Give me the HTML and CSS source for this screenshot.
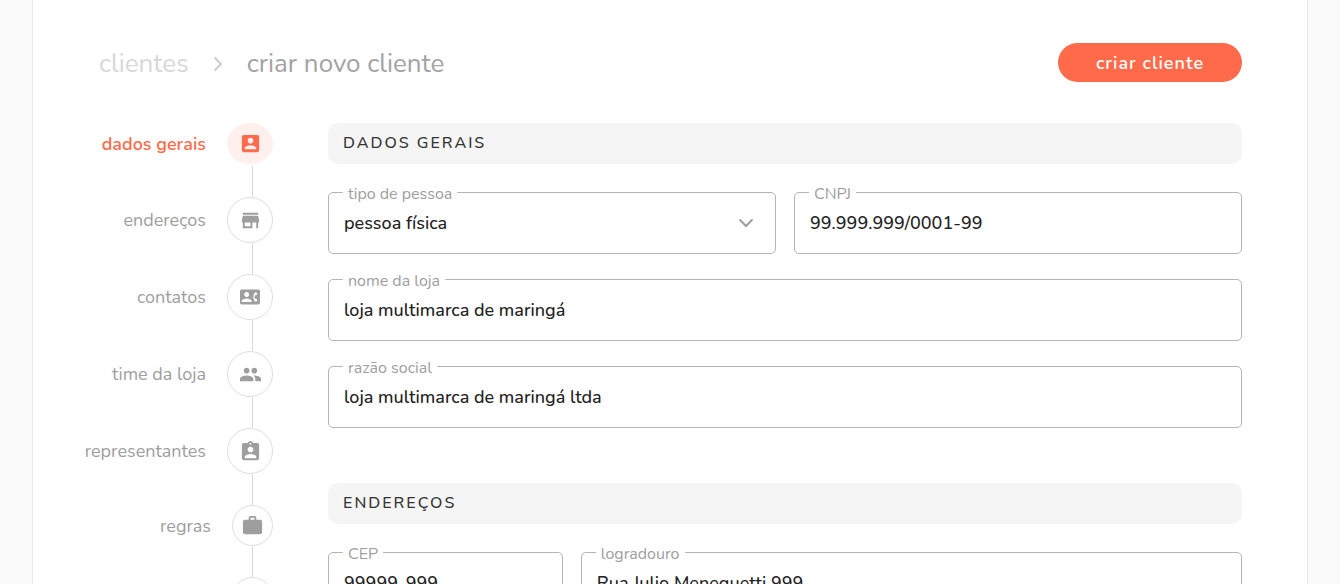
FILE: index.html
```html
<!DOCTYPE html>
<html lang="pt-BR">
<head>
  <meta charset="UTF-8" />
  <meta name="viewport" content="width=device-width, initial-scale=1.0" />
  <title>criar novo cliente</title>
  <link rel="stylesheet" href="styles.css">
</head>
<body>
  <main class="card">
    <header class="header">
      <nav class="breadcrumb">
        <a href="#">clientes</a>
        <svg class="chevron" viewBox="0 0 10 16"><path d="M1.5 1.5L8 8l-6.500 6.500" /></svg>
        <h1>criar novo cliente</h1>
      </nav>
      <button type="submit" form="clientForm" class="button">criar cliente</button>
    </header>

    <div class="content">
      <ul class="steps">
        <li class="step active">
          <a href="#dados">
            <span>dados gerais</span>
            <i class="circle"><svg class="icon" viewBox="0 0 24 24"><path d="M3 5v14c0 1.100.890 2 2 2h14c1.100 0 2-.900 2-2V5c0-1.100-.900-2-2-2H5c-1.110 0-2 .900-2 2zm12 4c0 1.660-1.340 3-3 3s-3-1.340-3-3 1.340-3 3-3 3 1.340 3 3zm-9 8c0-2 4-3.100 6-3.100s6 1.100 6 3.100v1H6v-1z" /></svg></i>
          </a>
        </li>
        <li class="step">
          <a href="#enderecos">
            <span>endereços</span>
            <i class="circle"><svg class="icon" viewBox="0 0 24 24"><path d="M20 4H4v2h16V4zm1 10v-2l-1-5H4l-1 5v2h1v6h10v-6h4v6h2v-6h1zm-9 4H6v-4h6v4z" /></svg></i>
          </a>
        </li>
        <li class="step">
          <a href="#">
            <span>contatos</span>
            <i class="circle"><svg class="icon small" viewBox="0 0 24 24"><path d="M22 3H2C.9 3 0 3.900 0 5v14c0 1.100.9 2 2 2h20c1.100 0 1.990-.9 1.990-2L24 5c0-1.100-.9-2-2-2zM8 6c1.660 0 3 1.340 3 3s-1.340 3-3 3-3-1.340-3-3 1.340-3 3-3zm6 12H2v-1c0-2 4-3.100 6-3.100s6 1.100 6 3.100v1zm3.850-4h1.640L21 16l-1.990 1.990c-1.310-.98-2.280-2.380-2.730-3.990-.18-.64-.28-1.310-.28-2s.1-1.360.28-2c.45-1.620 1.420-3.010 2.730-3.990L21 8l-1.510 2h-1.640c-.22.630-.35 1.300-.35 2s.13 1.370.35 2z" /></svg></i>
          </a>
        </li>
        <li class="step">
          <a href="#">
            <span>time da loja</span>
            <i class="circle"><svg class="icon" viewBox="0 0 24 24"><path d="M16 11c1.660 0 2.990-1.340 2.990-3S17.660 5 16 5c-1.660 0-3 1.340-3 3s1.340 3 3 3zm-8 0c1.660 0 2.990-1.340 2.990-3S9.660 5 8 5C6.340 5 5 6.340 5 8s1.340 3 3 3zm0 2c-2.330 0-7 1.170-7 3.500V19h14v-2.500c0-2.330-4.670-3.500-7-3.500zm8 0c-.29 0-.62.02-.97.050 1.160.84 1.970 1.970 1.970 3.450V19h6v-2.500c0-2.330-4.670-3.500-7-3.500z" /></svg></i>
          </a>
        </li>
        <li class="step">
          <a href="#">
            <span>representantes</span>
            <i class="circle"><svg class="icon" viewBox="0 0 24 24"><path d="M19 3h-4.180C14.400 1.840 13.300 1 12 1c-1.300 0-2.400.84-2.820 2H5c-1.100 0-2 .9-2 2v14c0 1.100.9 2 2 2h14c1.100 0 2-.9 2-2V5c0-1.100-.9-2-2-2zm-7 0c.55 0 1 .45 1 1s-.45 1-1 1-1-.45-1-1 .45-1 1-1zm0 4c1.660 0 3 1.340 3 3s-1.340 3-3 3-3-1.340-3-3 1.340-3 3-3zm6 12H6v-1.400c0-2 4-3.100 6-3.100s6 1.100 6 3.100V19z" /></svg></i>
          </a>
        </li>
        <li class="step compact">
          <a href="#">
            <span>regras</span>
            <i class="circle"><svg class="icon" viewBox="0 0 24 24"><path d="M20 6h-4V4c0-1.110-.89-2-2-2h-4c-1.110 0-2 .89-2 2v2H4c-1.110 0-1.990.89-1.990 2L2 19c0 1.110.89 2 2 2h16c1.110 0 2-.89 2-2V8c0-1.110-.89-2-2-2zm-6 0h-4V4h4v2z" /></svg></i>
          </a>
        </li>
        <li class="step compact">
          <i class="circle"></i>
        </li>
      </ul>

      <form class="form" id="clientForm">
        <section class="section" id="dados">
          <h2>DADOS GERAIS</h2>
          <div class="row halves">
            <div class="field">
              <label for="tipo">tipo de pessoa</label>
              <select id="tipo" name="tipo">
                <option>pessoa física</option>
              </select>
              <svg class="arrow" viewBox="0 0 16 10"><path d="M1.500 1.500L8 8l6.500-6.500" /></svg>
            </div>
            <div class="field">
              <label for="cnpj">CNPJ</label>
              <input type="text" id="cnpj" name="cnpj" value="99.999.999/0001-99" />
            </div>
          </div>
          <div class="field">
            <label for="nome">nome da loja</label>
            <input type="text" id="nome" name="nome" value="loja multimarca de maringá" />
          </div>
          <div class="field">
            <label for="razao">razão social</label>
            <input type="text" id="razao" name="razao" value="loja multimarca de maringá ltda" />
          </div>
        </section>

        <section class="section" id="enderecos">
          <h2>ENDEREÇOS</h2>
          <div class="row address">
            <div class="field">
              <label for="cep">CEP</label>
              <input type="text" id="cep" name="cep" value="99999-999" />
            </div>
            <div class="field">
              <label for="logradouro">logradouro</label>
              <input type="text" id="logradouro" name="logradouro" value="Rua Julio Meneguetti 999" />
            </div>
          </div>
        </section>
      </form>
    </div>
  </main>
</body>
</html>
```
FILE: styles.css
```css
* {
  box-sizing: border-box;
}

body {
  font-family: Nunito, Lato, sans-serif;
  background: #fafafa;
  margin: 0;
  padding: 0 32px;
  height: 100vh;
  overflow: hidden;
}

.card {
  background: #fff;
  border: 1px solid #e8e8e8;
  border-width: 0 1px;
  min-height: 100vh;
  padding: 43px 65px 43px 49px;
}

.header {
  display: flex;
  justify-content: space-between;
  align-items: center;
  padding-left: 17px;
  margin-bottom: 41px;
}

.breadcrumb {
  display: flex;
  align-items: center;
  gap: 24px;
  padding-top: 2px;
  font-size: 26px;
  line-height: 37px;
}

.breadcrumb a {
  color: #d8d8d8;
  text-decoration: none;
}

.breadcrumb h1 {
  margin: 0;
  font-size: 26px;
  font-weight: 400;
  color: #a3a3a3;
}

.chevron {
  width: 10px;
  height: 16px;
  fill: none;
  stroke: #ccc;
  stroke-width: 2;
}

.button {
  width: 184px;
  height: 39px;
  background: #ff6b4a;
  color: #fff;
  border: none;
  border-radius: 20px;
  font-family: inherit;
  font-size: 18px;
  font-weight: 600;
  letter-spacing: 1px;
  cursor: pointer;
}

.content {
  display: flex;
  align-items: flex-start;
  gap: 55px;
}

/* Steps */
.steps {
  width: 191px;
  flex-shrink: 0;
  list-style: none;
  margin: 0;
  padding: 0;
}

.step + .step::before {
  content: "";
  display: block;
  width: 1px;
  height: 31px;
  margin: 0 20px 0 auto;
  background: #d9d9d9;
}

.step a {
  display: flex;
  justify-content: flex-end;
  align-items: center;
  gap: 21px;
  color: #9e9e9e;
  font-size: 18px;
  text-decoration: none;
}

.circle {
  display: flex;
  flex-shrink: 0;
  justify-content: center;
  align-items: center;
  width: 46px;
  height: 46px;
  border: 1px solid #dedede;
  border-radius: 50%;
}

.icon {
  width: 23px;
  height: 23px;
  fill: #9e9e9e;
}

.icon.small {
  width: 20px;
  height: 20px;
}

.active {
  margin-bottom: 2px;
}

.active a {
  color: #ff6b4a;
  font-weight: 600;
}

.active .circle {
  height: 41px;
  background: #fff0ed;
  border: none;
}

.active .icon {
  fill: #ff6b4a;
}

.compact .circle {
  width: 41px;
  height: 41px;
  margin-left: auto;
}

.compact a .circle {
  margin-left: 0;
}

/* Form */
.form {
  flex: 1;
  min-width: 0;
}

.section {
  display: flex;
  flex-direction: column;
  gap: 25px;
  margin-bottom: 55px;
}

.section h2 {
  margin: 0 0 3px;
  padding: 0 15px;
  background: #f5f5f5;
  border-radius: 10px;
  color: #333;
  font-size: 16px;
  font-weight: 500;
  line-height: 41px;
  letter-spacing: 2px;
}

.row {
  display: grid;
  gap: 18px;
}

.halves {
  grid-template-columns: 1fr 1fr;
}

.address {
  grid-template-columns: 235fr 662fr;
}

.field {
  position: relative;
}

.field label {
  position: absolute;
  top: -8px;
  left: 15px;
  padding: 0 5px;
  background: #fff;
  color: #9e9e9e;
  font-size: 16px;
  line-height: 20px;
}

.field input,
.field select {
  display: block;
  width: 100%;
  height: 62px;
  padding: 0 15px;
  background: #fff;
  border: 1px solid #b5b5b5;
  border-radius: 5px;
  color: #222;
  font-family: inherit;
  font-size: 18px;
  font-weight: 500;
  appearance: none;
}

.field input:focus,
.field select:focus {
  outline: none;
  border-color: #ff6b4a;
}

.arrow {
  position: absolute;
  top: 26px;
  right: 22px;
  width: 16px;
  height: 10px;
  fill: none;
  stroke: #9e9e9e;
  stroke-width: 2;
  pointer-events: none;
}
```
